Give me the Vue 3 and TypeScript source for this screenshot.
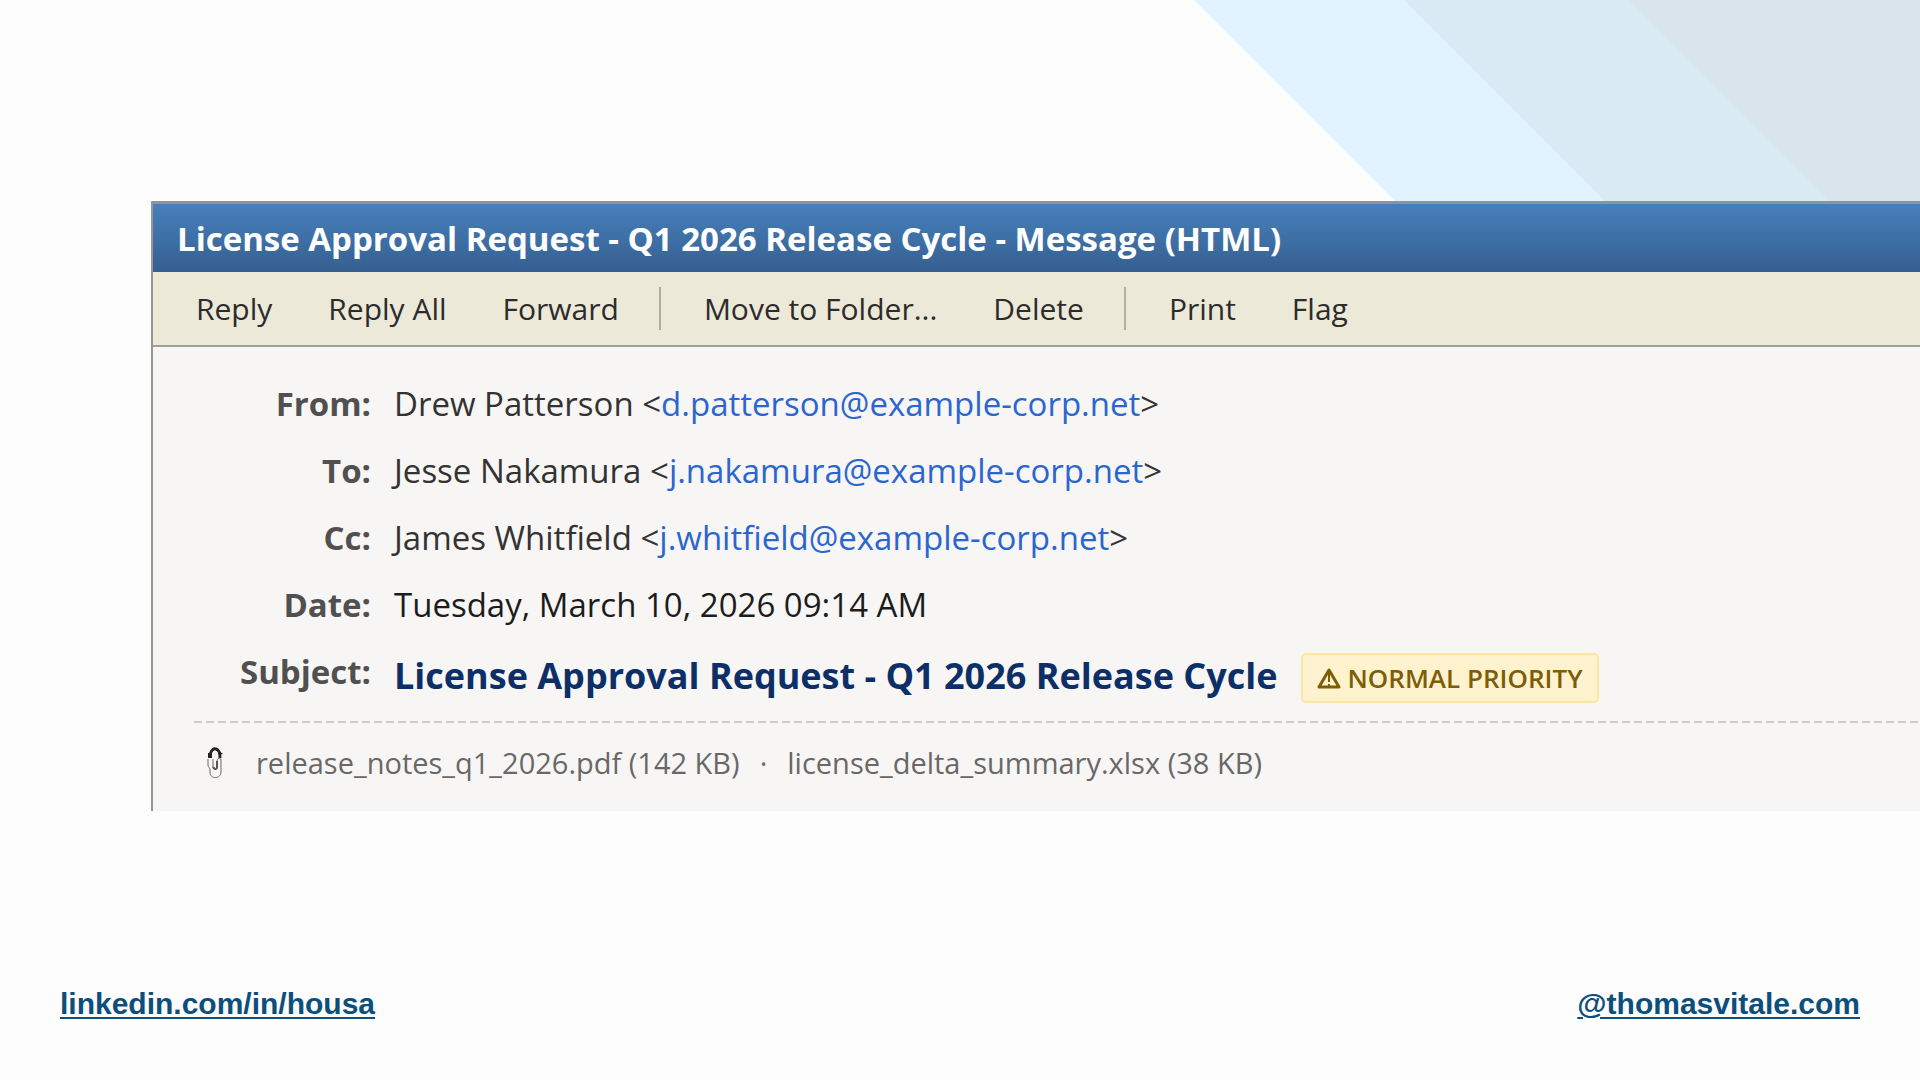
<script setup lang="ts">
interface Recipient {
  label: string
  name: string
  email: string
}

interface Attachment {
  file: string
  size: string
}

const toolbarGroups: string[][] = [
  ['Reply', 'Reply All', 'Forward'],
  ['Move to Folder...', 'Delete'],
  ['Print', 'Flag'],
]

const recipients: Recipient[] = [
  { label: 'From:', name: 'Drew Patterson', email: 'd.patterson@example-corp.net' },
  { label: 'To:', name: 'Jesse Nakamura', email: 'j.nakamura@example-corp.net' },
  { label: 'Cc:', name: 'James Whitfield', email: 'j.whitfield@example-corp.net' },
]

const attachments: Attachment[] = [
  { file: 'release_notes_q1_2026.pdf', size: '142 KB' },
  { file: 'license_delta_summary.xlsx', size: '38 KB' },
]
</script>

<template>
  <main class="slide">
    <svg class="stripes" viewBox="0 0 740 240" aria-hidden="true">
      <polygon points="14,0 740,0 740,240 254,240" fill="#e1f3fe" />
      <polygon points="224,0 740,0 740,240 464,240" fill="#daeaf5" />
      <polygon points="448,0 740,0 740,240 688,240" fill="#dae4ed" />
    </svg>

    <article class="window">
      <h1 class="titlebar">License Approval Request - Q1 2026 Release Cycle - Message (HTML)</h1>

      <div class="toolbar" role="toolbar" aria-label="Message actions">
        <div v-for="group in toolbarGroups" :key="group[0]" class="group">
          <button v-for="action in group" :key="action" type="button">{{ action }}</button>
        </div>
      </div>

      <div class="message">
        <dl class="fields">
          <template v-for="person in recipients" :key="person.label">
            <dt>{{ person.label }}</dt>
            <dd>{{ person.name }} &lt;<a :href="`mailto:${person.email}`">{{ person.email }}</a>&gt;</dd>
          </template>
          <dt>Date:</dt>
          <dd class="date">Tuesday, March 10, 2026 09:14 AM</dd>
          <dt>Subject:</dt>
          <dd class="subject">
            <strong>License Approval Request - Q1 2026 Release Cycle</strong>
            <span class="priority">
              <svg width="24" height="22" viewBox="0 0 24 22" aria-hidden="true">
                <path d="M12 3 L22 20 H2 Z" fill="none" stroke="currentColor" stroke-width="3" stroke-linejoin="round" />
                <path d="M12 5 V15 M12 17 V20" stroke="currentColor" stroke-width="2" />
              </svg>
              NORMAL PRIORITY
            </span>
          </dd>
        </dl>

        <div class="attachments">
          <svg class="clip" width="18" height="32" viewBox="0 0 18 32" fill="none" aria-hidden="true">
            <path d="M4 8 C5 3 8 1 10 2 C13 3 14 5 14 11" stroke="#222" stroke-width="3" />
            <path d="M12 3 L17 7 L13 8 Z M2 6 H6 V11 H2 Z" fill="#222" />
            <path d="M2 12 V18 C2 20 4 21 4 23 V25 C4 33 15 32 15 25 V13 C15 10 11 11 11 14 V20 C11 23 7 23 7 20 V12" stroke="#666" stroke-width="1" />
            <path d="M11 14 V20 C11 23 8 22 7 20" stroke="#555" stroke-width="2" />
          </svg>
          <template v-for="(item, index) in attachments" :key="item.file">
            <span v-if="index > 0" class="dot">·</span>
            <span>{{ item.file }} ({{ item.size }})</span>
          </template>
        </div>
      </div>
    </article>

    <footer class="links">
      <a href="https://linkedin.com/in/housa">linkedin.com/in/housa</a>
      <a href="https://thomasvitale.com">@thomasvitale.com</a>
    </footer>
  </main>
</template>

<style>
body {
  margin: 0;
  background: #fdfdfd;
}
</style>

<style scoped>
.slide {
  position: relative;
  display: flex;
  flex-direction: column;
  justify-content: space-between;
  box-sizing: border-box;
  min-height: 100vh;
  padding-top: 201px;
  overflow: hidden;
  font-family: "Open Sans", "Noto Sans", sans-serif;
}

.stripes {
  position: absolute;
  top: 0;
  right: 0;
  width: 740px;
  height: 240px;
}

.window {
  position: relative;
  margin-left: 151px;
  border-top: 3px solid #8d959b;
  border-left: 2px solid #969696;
  background: #f8f6f4;
}

.titlebar {
  margin: 0;
  padding: 2px 24px 0;
  background: linear-gradient(#4780bb, #355f91);
  color: #fff;
  font-size: 33px;
  font-weight: 700;
  line-height: 66px;
  white-space: nowrap;
}

.toolbar {
  display: flex;
  align-items: center;
  height: 73px;
  padding-left: 15px;
  border-bottom: 2px solid #a09f99;
  background: #ece9d8;
}

.group {
  display: flex;
}

.group + .group {
  margin-left: 12px;
  padding-left: 15px;
  border-left: 2px solid #b0aea2;
}

.toolbar button {
  padding: 0 28px;
  border: 0;
  background: none;
  color: #2c2c2c;
  font-family: inherit;
  font-size: 30px;
  line-height: 43px;
}

.message {
  padding: 34px 0 26px 41px;
}

.fields {
  display: grid;
  grid-template-columns: 177px 1fr;
  column-gap: 23px;
  row-gap: 21px;
  margin: 0 0 18px;
  color: #333;
  font-size: 33px;
  line-height: 46px;
  white-space: nowrap;
}

.fields dt {
  color: #505050;
  font-weight: 700;
  text-align: right;
}

.fields dd {
  margin: 0;
}

.fields a {
  color: #2b66cf;
  text-decoration: none;
}

.fields .date {
  color: #1c1c1c;
}

.fields .subject {
  display: flex;
  align-items: baseline;
  gap: 24px;
  color: #0c2f68;
  font-size: 36px;
  line-height: 54px;
}

.priority {
  display: flex;
  align-items: center;
  gap: 6px;
  padding: 0 14px;
  border: 2px solid #fbe6a4;
  border-radius: 5px;
  background: #fff2cf;
  color: #7d5d06;
  font-size: 26px;
  font-weight: 600;
  line-height: 46px;
}

.attachments {
  display: flex;
  align-items: center;
  padding: 20px 0 0 12px;
  background: repeating-linear-gradient(90deg, #cbcbcb 0 8px, transparent 8px 12px) top left / 100% 2px no-repeat;
  color: #686868;
  font-size: 29px;
  line-height: 44px;
  white-space: nowrap;
}

.clip {
  margin-right: 32px;
}

.dot {
  margin: 0 20px;
}

.links {
  display: flex;
  justify-content: space-between;
  padding: 0 60px 58px;
  font-family: "Liberation Sans", Arial, sans-serif;
  font-size: 30px;
  font-weight: 700;
  line-height: 36px;
}

.links a {
  color: #0c4f7c;
  text-decoration-thickness: 2px;
  text-underline-offset: 3px;
}
</style>
